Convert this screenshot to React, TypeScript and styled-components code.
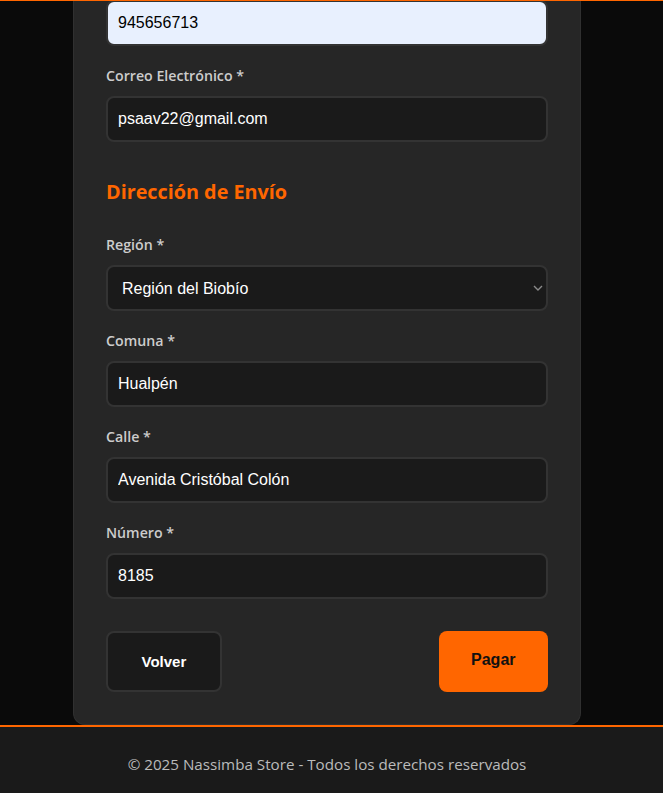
import React from "react";
import styled, { createGlobalStyle } from "styled-components";

const GlobalStyle = createGlobalStyle`
  html, body {
    margin: 0;
    padding: 0;
    background: #0a0a0a;
    font-family: "Open Sans", "Noto Sans", sans-serif;
  }
  * { box-sizing: border-box; }
`;

const Page = styled.div`
  display: flex;
  flex-direction: column;
  min-height: 793px;
  background: #0a0a0a;
  overflow: hidden;
`;

const HeaderEdge = styled.div`
  position: relative;
  z-index: 2;
  height: 1px;
  background: #ff6600;
`;

const Main = styled.main`
  display: flex;
  justify-content: center;
  padding-right: 9px;
  margin-top: -1px;
`;

const Card = styled.form`
  width: 508px;
  display: flex;
  flex-direction: column;
  background: #262626;
  border: 1px solid #303030;
  border-top: none;
  border-radius: 0 0 12px 12px;
  padding: 0 32px 32px;
`;

const FieldGroup = styled.div`
  display: flex;
  flex-direction: column;
  margin-bottom: 20px;
`;

const Label = styled.label`
  display: block;
  font-size: 14.2px;
  line-height: 20px;
  font-weight: 600;
  color: #cccccc;
  margin-bottom: 10px;
`;

const Input = styled.input<{ $autofill?: boolean }>`
  width: 100%;
  height: 46px;
  padding: 12px 10px;
  border: 2px solid #333333;
  border-radius: 8px;
  background: ${(p) => (p.$autofill ? "#e8f0fe" : "#1a1a1a")};
  color: ${(p) => (p.$autofill ? "#000000" : "#ffffff")};
  font-family: "Liberation Sans", Arial, sans-serif;
  font-size: 16px;
  outline: none;
`;

const SelectWrap = styled.div`
  position: relative;
`;

const Select = styled.select`
  width: 100%;
  height: 46px;
  padding: 12px 30px 12px 14px;
  border: 2px solid #333333;
  border-radius: 8px;
  background: #1a1a1a;
  color: #ffffff;
  font-family: "Liberation Sans", Arial, sans-serif;
  font-size: 16px;
  appearance: none;
  -webkit-appearance: none;
  outline: none;
`;

const Chevron = styled.svg`
  position: absolute;
  right: 5px;
  top: 50%;
  width: 10px;
  height: 6px;
  margin-top: -3px;
  pointer-events: none;
`;

const SectionTitle = styled.h3`
  margin: 16px 0 29px;
  font-size: 19.8px;
  line-height: 28px;
  font-weight: 700;
  color: #ff6600;
`;

const Actions = styled.div`
  display: flex;
  justify-content: space-between;
  margin-top: 12px;
`;

const Button = styled.button<{ $primary?: boolean }>`
  padding: ${(p) => (p.$primary ? "20px 32.5px" : "20px 33.5px")};
  border-radius: 8px;
  font-family: "Liberation Sans", Arial, sans-serif;
  font-weight: 700;
  font-size: ${(p) => (p.$primary ? "16px" : "15px")};
  line-height: normal;
  cursor: pointer;
  border: ${(p) => (p.$primary ? "none" : "2px solid #333333")};
  background: ${(p) => (p.$primary ? "#ff6600" : "#1a1a1a")};
  color: ${(p) => (p.$primary ? "#111111" : "#ffffff")};
  height: 61px;
  display: flex;
  align-items: flex-start;
  justify-content: center;
`;

const Footer = styled.footer`
  border-top: 2px solid #ff6600;
  background: #1a1a1a;
  padding: 26px 9px 18px 0;
  text-align: center;
  color: #bbbbbb;
  font-size: 15.2px;
  line-height: 22px;
`;

export default function App() {
  return (
    <>
      <GlobalStyle />
      <Page>
        <HeaderEdge />
        <Main>
          <Card onSubmit={(e) => e.preventDefault()}>
            <FieldGroup>
              <Input $autofill defaultValue="945656713" />
            </FieldGroup>
            <FieldGroup>
              <Label>Correo Electrónico *</Label>
              <Input defaultValue="psaav22@gmail.com" />
            </FieldGroup>

            <SectionTitle>Dirección de Envío</SectionTitle>

            <FieldGroup>
              <Label>Región *</Label>
              <SelectWrap>
                <Select defaultValue="biobio">
                  <option value="biobio">Región del Biobío</option>
                </Select>
                <Chevron viewBox="0 0 10 6">
                  <path d="M1 1 L5 5 L9 1" fill="none" stroke="#8a8a8a" strokeWidth="1.4" />
                </Chevron>
              </SelectWrap>
            </FieldGroup>
            <FieldGroup>
              <Label>Comuna *</Label>
              <Input defaultValue="Hualpén" />
            </FieldGroup>
            <FieldGroup>
              <Label>Calle *</Label>
              <Input defaultValue="Avenida Cristóbal Colón" />
            </FieldGroup>
            <FieldGroup>
              <Label>Número *</Label>
              <Input defaultValue="8185" />
            </FieldGroup>

            <Actions>
              <Button type="button">Volver</Button>
              <Button type="submit" $primary>Pagar</Button>
            </Actions>
          </Card>
        </Main>
        <Footer>© 2025 Nassimba Store - Todos los derechos reservados</Footer>
      </Page>
    </>
  );
}
